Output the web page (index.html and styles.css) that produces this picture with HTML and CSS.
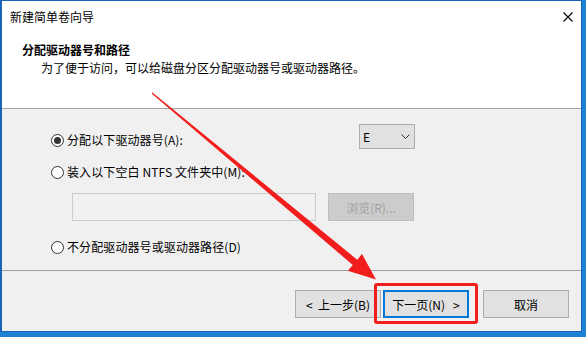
FILE: index.html
```html
<!DOCTYPE html>
<html lang="zh-CN">
<head>
    <meta charset="UTF-8">
    <meta name="viewport" content="width=device-width, initial-scale=1.0">
    <title>新建简单卷向导</title>
    <link rel="stylesheet" href="styles.css">
</head>
<body>
    <div class="window">
        <div class="titlebar">
            <span class="title">新建简单卷向导</span>
            <svg class="close" width="10" height="10" viewBox="0 0 10 10">
                <path d="M0.5 0.5 L9.5 9.5 M9.5 0.5 L0.5 9.5" stroke="#000" stroke-width="1.1" fill="none"/>
            </svg>
        </div>
        <div class="header">
            <div class="head-title">分配驱动器号和路径</div>
            <div class="head-sub">为了便于访问，可以给磁盘分区分配驱动器号或驱动器路径。</div>
        </div>
        <div class="content">
            <div class="row row-1">
                <label class="option opt-wide">
                    <span class="radio checked"></span>
                    <span class="label">分配以下驱动器号(A):</span>
                </label>
                <div class="select">
                    <span>E</span>
                    <svg width="9" height="5" viewBox="0 0 9 5">
                        <path d="M0.5 0.5 L4.5 4.5 L8.5 0.5" stroke="#333" stroke-width="1" fill="none"/>
                    </svg>
                </div>
            </div>
            <div class="row row-2">
                <label class="option">
                    <span class="radio"></span>
                    <span class="label">装入以下空白 NTFS 文件夹中(M):</span>
                </label>
            </div>
            <div class="row row-3">
                <div class="textbox"></div>
                <div class="btn disabled">浏览(R)...</div>
            </div>
            <div class="row row-4">
                <label class="option">
                    <span class="radio"></span>
                    <span class="label">不分配驱动器号或驱动器路径(D)</span>
                </label>
            </div>
        </div>
        <div class="footer">
            <div class="btn">&lt;&nbsp; 上一步(B)</div>
            <div class="btn primary">下一页(N)&nbsp;&nbsp; &gt;</div>
            <div class="btn cancel">取消</div>
        </div>

        <!-- annotation drawn on top of the dialog -->
        <svg class="arrow" width="586" height="337" viewBox="0 0 586 337">
            <polygon points="152.4,92.4 357.2,259.7 362,254 376,279.5 347.8,270.8 352.8,265 151.6,93.6" fill="#f21d1d"/>
        </svg>
        <div class="highlight"></div>
    </div>
</body>
</html>
```

FILE: styles.css
```css
*{
    box-sizing: border-box;
}
body{
    margin: 0;
    width: 586px;
    height: 337px;
    overflow: hidden;
    background-color: #1b82d4;
    font-family: "Noto Sans CJK SC", "Microsoft YaHei", sans-serif;
    font-size: 12px;
    color: #000;
}
.window{
    position: relative;
    width: 582px;
    height: 332px;
    border: 1px solid #1864b8;
    border-left-width: 2px;
    background-color: #f0f0f0;
    display: flex;
    flex-direction: column;
}
.titlebar{
    height: 31px;
    background-color: #fff;
    display: flex;
    align-items: center;
    justify-content: space-between;
    padding: 0 8px 0 8px;
}
.title{
    line-height: 16px;
}
.close{
    display: block;
}
.header{
    height: 77px;
    background-color: #fff;
    border-bottom: 1px solid #a0a0a0;
    padding: 10px 0 0 20px;
}
.head-title{
    font-weight: bold;
    line-height: 16px;
}
.head-sub{
    line-height: 16px;
    margin-top: 2px;
    padding-left: 19px;
}
.content{
    height: 162px;
    border-bottom: 1px solid #a0a0a0;
    padding: 15px 0 0 49px;
}
.row{
    display: flex;
}
.row-1{
    height: 25px;
}
.row-2{
    margin-top: 15px;
    height: 16px;
}
.row-3{
    margin-top: 13px;
    height: 28px;
    padding-left: 21px;
}
.row-4{
    margin-top: 18px;
    height: 16px;
}
.option{
    display: flex;
    align-items: center;
    height: 16px;
}
.opt-wide{
    width: 308px;
    margin-top: 8px;
}
.radio{
    width: 13px;
    height: 13px;
    border: 1px solid #333;
    border-radius: 50%;
    background-color: #fff;
    display: flex;
    align-items: center;
    justify-content: center;
    margin-right: 3px;
}
.radio.checked::after{
    content: "";
    width: 7px;
    height: 7px;
    border-radius: 50%;
    background-color: #333;
}
.label{
    line-height: 16px;
    white-space: nowrap;
    letter-spacing: 0.1px;
}
.select{
    width: 56px;
    height: 25px;
    border: 1px solid #adadad;
    background-color: #e1e1e1;
    display: flex;
    align-items: center;
    justify-content: space-between;
    padding: 0 4px 0 3px;
}
.select svg{
    display: block;
}
.textbox{
    width: 244px;
    height: 28px;
    border: 1px solid #cccccc;
    background-color: #f0f0f0;
    margin-right: 12px;
}
.btn{
    width: 86px;
    height: 28px;
    border: 1px solid #adadad;
    background-color: #e1e1e1;
    display: flex;
    align-items: center;
    justify-content: center;
    white-space: nowrap;
}
.btn.disabled{
    background-color: #cccccc;
    border-color: #bfbfbf;
    color: #a0a0a0;
}
.btn.primary{
    border: 2px solid #0078d7;
    margin-left: 2px;
}
.btn.cancel{
    margin-left: 14px;
}
.footer{
    height: 60px;
    display: flex;
    justify-content: flex-end;
    align-items: flex-start;
    padding: 19px 12px 0 0;
}
.arrow{
    position: absolute;
    left: -2px;
    top: -1px;
    pointer-events: none;
}
.highlight{
    position: absolute;
    left: 372px;
    top: 282px;
    width: 104px;
    height: 41px;
    border: 3px solid #f21d1d;
    border-radius: 3px;
}
```
